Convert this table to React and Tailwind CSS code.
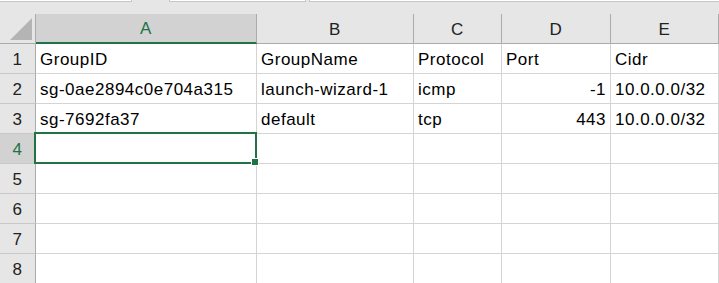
import React from 'react';

const cols = [
  { key: 'A', w: 'w-[221px]' },
  { key: 'B', w: 'w-[157px]' },
  { key: 'C', w: 'w-[88px]' },
  { key: 'D', w: 'w-[109px]' },
  { key: 'E', w: 'w-[108px]' },
];

const rows = [
  ['GroupID', 'GroupName', 'Protocol', 'Port', 'Cidr'],
  ['sg-0ae2894c0e704a315', 'launch-wizard-1', 'icmp', -1, '10.0.0.0/32'],
  ['sg-7692fa37', 'default', 'tcp', 443, '10.0.0.0/32'],
  ['', '', '', '', ''],
  ['', '', '', '', ''],
  ['', '', '', '', ''],
  ['', '', '', '', ''],
  ['', '', '', '', ''],
];

function Cell({ value, width, selected }) {
  const isNum = typeof value === 'number';
  return (
    <div
      className={`relative h-[30px] shrink-0 ${width} border-r border-b border-[#d4d4d4] bg-white flex items-center overflow-visible whitespace-nowrap px-[4px] pt-[2px] ${
        isNum ? 'justify-end' : 'justify-start'
      }`}
    >
      {value}
      {selected && (
        <div className="absolute left-[-2px] top-[-2px] w-[223px] h-[32px] border-2 border-[#217346] z-10">
          <div className="absolute right-[-4px] bottom-[-4px] w-[6px] h-[6px] bg-[#217346] border border-white box-content" />
        </div>
      )}
    </div>
  );
}

export default function App() {
  return (
    <div className="w-[719px] h-[283px] overflow-hidden bg-[#e6e6e6] text-[17px] tracking-[0.5px] text-black font-['Liberation_Sans',Arial,sans-serif]">
      {/* name box / formula bar edges */}
      <div className="flex h-[14px]">
        <div className="w-[132px] h-[2px] bg-white border-b border-r border-[#c6c6c6]" />
        <div className="w-[37px]" />
        <div className="w-[137px] h-[2px] bg-white border-b border-x border-[#c6c6c6]" />
        <div className="w-[3px]" />
        <div className="flex-1 h-[2px] bg-white border-b border-l border-[#c6c6c6]" />
      </div>

      {/* column headers */}
      <div className="flex h-[30px]">
        <div className="relative w-[36px] shrink-0 border-r border-b border-[#ababab] bg-[#e6e6e6]">
          <svg className="absolute right-[3px] bottom-[3px]" width="22" height="22" viewBox="0 0 22 22">
            <polygon points="22,0 22,22 0,22" fill="#b4b4b4" />
          </svg>
        </div>
        {cols.map((c, i) => (
          <div
            key={c.key}
            className={`${c.w} shrink-0 flex items-center justify-center pt-[2px] border-r ${
              i === 0
                ? 'bg-[#d2d2d2] border-b-2 border-b-[#217346] border-r-[#ababab] text-[#217346]'
                : 'bg-[#e6e6e6] border-b border-[#ababab] text-[#222]'
            }`}
          >
            {c.key}
          </div>
        ))}
      </div>

      {/* rows */}
      {rows.map((r, ri) => (
        <div key={ri} className="flex">
          <div
            className={`w-[36px] h-[30px] shrink-0 flex items-center justify-center pt-[2px] border-r border-b border-r-[#ababab] border-b-[#c8c8c8] ${
              ri === 3 ? 'bg-[#d2d2d2] text-[#217346]' : 'bg-[#e6e6e6] text-[#222]'
            }`}
          >
            {ri + 1}
          </div>
          {r.map((v, ci) => (
            <Cell key={ci} value={v} width={cols[ci].w} selected={ri === 3 && ci === 0} />
          ))}
        </div>
      ))}
    </div>
  );
}
